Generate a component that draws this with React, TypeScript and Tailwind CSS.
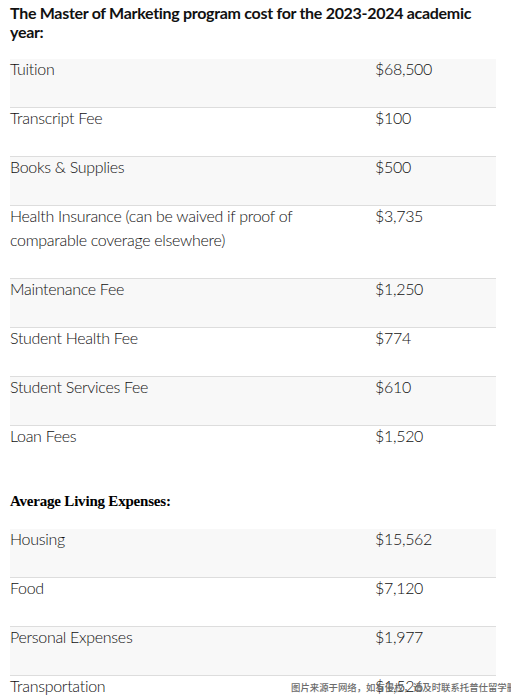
const costs: [string, string][] = [
  ['Tuition', '$68,500'],
  ['Transcript Fee', '$100'],
  ['Books & Supplies', '$500'],
  ['Health Insurance (can be waived if proof of comparable coverage elsewhere)', '$3,735'],
  ['Maintenance Fee', '$1,250'],
  ['Student Health Fee', '$774'],
  ['Student Services Fee', '$610'],
  ['Loan Fees', '$1,520'],
];

const living: [string, string][] = [
  ['Housing', '$15,562'],
  ['Food', '$7,120'],
  ['Personal Expenses', '$1,977'],
  ['Transportation', '$1,526'],
];

function CostTable({ rows }: { rows: [string, string][] }) {
  return (
    <div className="w-[486px]">
      {rows.map(([label, amount], i) => (
        <div
          key={label}
          className={`flex text-[16px] leading-[24px] tracking-[-0.3px] text-[#111] pb-[26px] ${
            i % 2 === 0 ? 'bg-[#f8f8f8]' : 'bg-white'
          } ${i < rows.length - 1 ? 'border-b border-[#dddddd]' : ''}`}
        >
          <div className="w-[365px] pr-[60px] -mt-[2px]">{label}</div>
          <div className="flex-1 -mt-[2px]">{amount}</div>
        </div>
      ))}
    </div>
  );
}

export default function App() {
  return (
    <div className="relative h-[698px] overflow-hidden bg-white px-[10px] font-['Lato',sans-serif] font-light">
      {/* Header */}
      <h2 className="pt-[3px] text-[16px] leading-[19px] tracking-[-0.3px] font-bold text-[#111]">
        The Master of Marketing program cost for the 2023-2024 academic year:
      </h2>

      <div className="mt-[18px]">
        <CostTable rows={costs} />
      </div>

      <h3 className="mt-[17px] font-['Liberation_Serif',serif] text-[15px] leading-[20px] font-bold tracking-[-0.2px] text-black">
        Average Living Expenses:
      </h3>

      <div className="mt-[18px]">
        <CostTable rows={living} />
      </div>

      {/* watermark */}
      <div className="absolute left-[291px] top-[681px] font-['Noto_Sans_CJK_SC',sans-serif] text-[9.4px] leading-[12px] font-medium text-[#6b6b6b] whitespace-nowrap">
        图片来源于网络，如有侵权，请及时联系托普仕留学删除
      </div>
    </div>
  );
}
